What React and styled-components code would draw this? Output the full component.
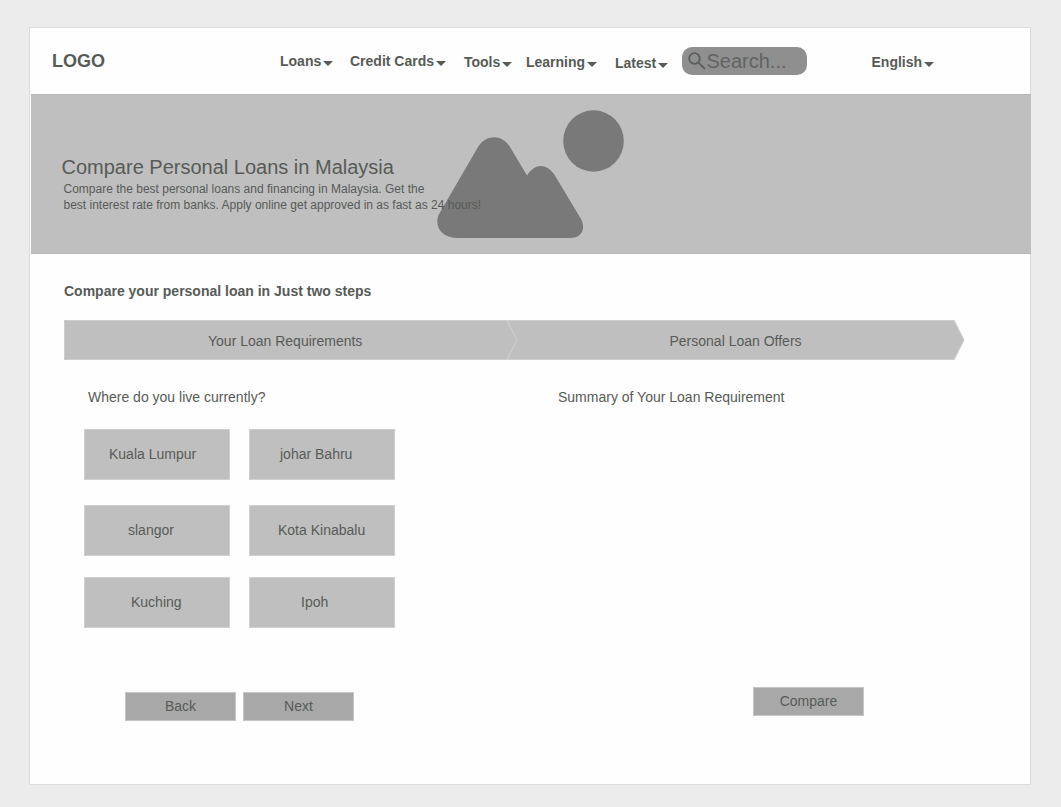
import React from "react";
import styled, { createGlobalStyle } from "styled-components";

const GlobalStyle = createGlobalStyle`
  * { box-sizing: border-box; }
  body {
    margin: 0;
    background: #ececec;
    color: #575b57;
    font: 14px/16px "Liberation Sans", Arial, sans-serif;
  }
  h1, h2, h3, p { margin: 0; font-size: inherit; font-weight: inherit; }
  button { font: inherit; color: inherit; }
`;

const Page = styled.div`
  height: 807px;
  padding: 27px 0 0 29px;
  overflow: hidden;
`;

const Sheet = styled.main`
  width: 1002px;
  height: 758px;
  border: 1px solid #dcdcdc;
  background: #fefefe;
`;

const Header = styled.header`
  display: flex;
  align-items: flex-start;
  height: 66px;
  padding-left: 22px;
`;

const Logo = styled.div`
  width: 228px;
  padding-top: 23px;
  font-size: 18px;
  line-height: 20px;
  font-weight: bold;
`;

const NavItem = styled.a`
  display: flex;
  flex: none;
  width: ${(p) => p.$width}px;
  padding-top: ${(p) => p.$top}px;
  font-weight: bold;
  white-space: nowrap;
`;

const Caret = styled.span`
  width: 0;
  height: 0;
  margin: 8px 0 0 1.5px;
  border: 5px solid transparent;
  border-top-color: #575b57;
  border-bottom: 0;
`;

const SearchBox = styled.div`
  display: flex;
  flex: none;
  align-items: center;
  width: 125px;
  height: 28px;
  margin: 18.5px 65px 0 0.5px;
  padding: 1px 0 0 5px;
  border-radius: 10px;
  background: #8f8f8f;
  color: #616463;
  font-size: 20px;
  line-height: 24px;
`;

const SearchIcon = styled.svg`
  flex: none;
  width: 20px;
  height: 20px;
`;

const Hero = styled.section`
  position: relative;
  width: 1000px;
  height: 160px;
  margin-left: 1px;
  padding: 60px 0 0 30.5px;
  background: #bfbfbf;
  border-top: 1px solid #b7b7b7;
  border-bottom: 1px solid #b7b7b7;
`;

const HeroArt = styled.svg`
  position: absolute;
  left: 399px;
  top: 0;
  width: 210px;
  height: 158px;
  fill: #797979;
`;

const HeroText = styled.div`
  position: relative;
`;

const HeroTitle = styled.h1`
  font-size: 20px;
  line-height: 24px;
  white-space: nowrap;
`;

const HeroCopy = styled.p`
  padding: 2px 0 0 2px;
  font-size: 12px;
  line-height: 16px;
  white-space: nowrap;
`;

const Content = styled.section`
  padding: 29px 0 0 34px;
`;

const Heading = styled.h2`
  font-weight: bold;
`;

const Steps = styled.div`
  display: flex;
  margin-top: 21px;
`;

const Step = styled.div`
  position: relative;
  z-index: ${(p) => (p.$front ? 1 : 0)};
  flex: none;
  width: ${(p) => p.$width}px;
  height: 40px;
  margin-left: ${(p) => (p.$front ? 0 : -10)}px;
  padding: 13px 0 0 ${(p) => p.$indent}px;
  background: #cdcdcd;
  clip-path: polygon(0 0, calc(100% - 10px) 0, 100% 50%, calc(100% - 10px) 100%, 0 100%);

  &::before {
    content: "";
    position: absolute;
    z-index: -1;
    inset: 1px;
    background: #bfbfbf;
    clip-path: polygon(0 0, calc(100% - 10px) 0, 100% 50%, calc(100% - 10px) 100%, 0 100%);
  }
`;

const Columns = styled.div`
  display: flex;
  margin-top: 29px;
`;

const Column = styled.div`
  width: ${(p) => p.$width}px;
`;

const Question = styled.h3`
  padding-left: ${(p) => p.$indent || 0}px;
  white-space: nowrap;
`;

const CityGrid = styled.div`
  display: grid;
  grid-template-columns: 146px 146px;
  grid-template-rows: 76px 72px 51px;
  column-gap: 19px;
  margin: 24px 0 0 20px;
`;

const CityButton = styled.button`
  height: 51px;
  padding: 0 0 2px ${(p) => p.$indent}px;
  border: 1px solid #d0d0d0;
  background: #bfbfbf;
  text-align: left;
`;

const Actions = styled.div`
  display: flex;
  gap: 7px;
  margin: ${(p) => p.$margin};
`;

const ActionButton = styled.button`
  width: 111px;
  height: 29px;
  padding: 0 0 2px;
  border: 1px solid #c6c6c6;
  background: #a8a8a8;
  text-align: center;
`;

const menus = [
  { label: "Loans", width: 70, top: 25 },
  { label: "Credit Cards", width: 114, top: 25 },
  { label: "Tools", width: 62, top: 26 },
  { label: "Learning", width: 89, top: 26 },
  { label: "Latest", width: 66, top: 27 },
];

const cities = [
  { name: "Kuala Lumpur", indent: 24 },
  { name: "johar Bahru", indent: 30 },
  { name: "slangor", indent: 43 },
  { name: "Kota Kinabalu", indent: 28 },
  { name: "Kuching", indent: 46 },
  { name: "Ipoh", indent: 51 },
];

function Menu({ label, width, top }) {
  return (
    <NavItem $width={width} $top={top}>
      {label}
      <Caret />
    </NavItem>
  );
}

export default function App() {
  return (
    <Page>
      <GlobalStyle />
      <Sheet>
        <Header>
          <Logo>LOGO</Logo>
          {menus.map((m) => (
            <Menu key={m.label} {...m} />
          ))}
          <SearchBox>
            <SearchIcon viewBox="0 0 20 20" fill="none" stroke="#5c5f5e" strokeWidth="1.8">
              <circle cx="7.5" cy="7.5" r="5.3" />
              <path d="M11.3 11.3L18 18" />
            </SearchIcon>
            Search...
          </SearchBox>
          <Menu label="English" width={70} top={26} />
        </Header>
        <Hero>
          <HeroArt viewBox="430 95 210 158">
            <path d="M478 147C486 134 502 134 510 147L527 175.5C535 163 546 163 554 174L581 219C586 229 582 238 570 238H458C442 238 434 227 438.500 215Z" />
            <ellipse cx="593.5" cy="141" rx="30.300" ry="30.700" />
          </HeroArt>
          <HeroText>
            <HeroTitle>Compare Personal Loans in Malaysia</HeroTitle>
            <HeroCopy>
              Compare the best personal loans and financing in Malaysia. Get the
              <br />
              best interest rate from banks. Apply online get approved in as fast as 24 hours!
            </HeroCopy>
          </HeroText>
        </Hero>
        <Content>
          <Heading>Compare your personal loan in Just two steps</Heading>
          <Steps>
            <Step $front $width={453.5} $indent={144}>Your Loan Requirements</Step>
            <Step $width={457} $indent={162}>Personal Loan Offers</Step>
          </Steps>
          <Columns>
            <Column $width={493}>
              <Question $indent={24}>Where do you live currently?</Question>
              <CityGrid>
                {cities.map((c) => (
                  <CityButton key={c.name} $indent={c.indent}>{c.name}</CityButton>
                ))}
              </CityGrid>
              <Actions $margin="64px 0 0 61px">
                <ActionButton>Back</ActionButton>
                <ActionButton>Next</ActionButton>
              </Actions>
            </Column>
            <Column $width={400}>
              <Question $indent={1}>Summary of Your Loan Requirement</Question>
              <Actions $margin="282px 0 0 196px">
                <ActionButton>Compare</ActionButton>
              </Actions>
            </Column>
          </Columns>
        </Content>
      </Sheet>
    </Page>
  );
}
